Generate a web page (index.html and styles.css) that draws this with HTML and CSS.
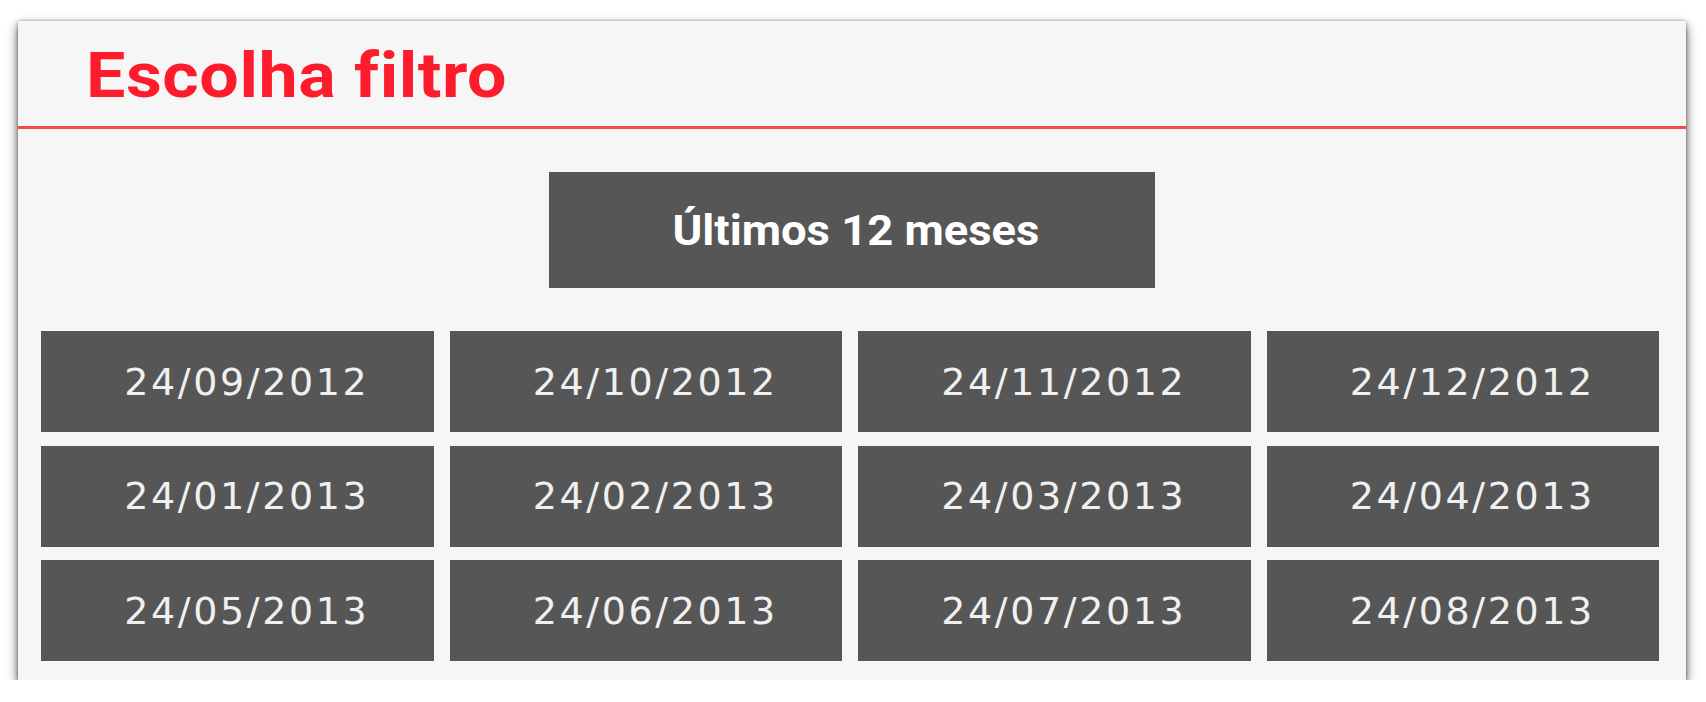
FILE: index.html
```html
<!DOCTYPE html>
<html lang="pt">
<head>
<meta charset="utf-8">
<title>Escolha filtro</title>
<link rel="stylesheet" href="styles.css">
</head>
<body>
<div class="panel">
  <div class="header">
    <h1 class="title">Escolha filtro</h1>
  </div>
  <div class="content">
    <button class="main-btn"><span class="main-label">Últimos 12 meses</span></button>
    <div class="grid">
      <button class="date-btn">24/09/2012</button>
      <button class="date-btn">24/10/2012</button>
      <button class="date-btn">24/11/2012</button>
      <button class="date-btn">24/12/2012</button>
      <button class="date-btn">24/01/2013</button>
      <button class="date-btn">24/02/2013</button>
      <button class="date-btn">24/03/2013</button>
      <button class="date-btn">24/04/2013</button>
      <button class="date-btn">24/05/2013</button>
      <button class="date-btn">24/06/2013</button>
      <button class="date-btn">24/07/2013</button>
      <button class="date-btn">24/08/2013</button>
    </div>
  </div>
</div>
</body>
</html>
```
FILE: styles.css
```css
html, body {
  margin: 0;
  padding: 0;
  background: #ffffff;
}
body {
  font-family: Roboto, "Liberation Sans", sans-serif;
}
.panel {
  margin: 21px 0 0 18px;
  width: 1668px;
  height: 659px;
  background: #f6f6f6;
  box-shadow: 0 5px 10px rgba(0, 0, 0, 0.7), 0 0 3px rgba(0, 0, 0, 0.35);
  display: flex;
  flex-direction: column;
}
.header {
  height: 105px;
  border-bottom: 3px solid #f04a4a;
  display: flex;
  align-items: center;
  padding-left: 68px;
}
.title {
  margin: 0;
  font-family: Roboto, "Liberation Sans", sans-serif;
  font-weight: 700;
  font-size: 63px;
  letter-spacing: 0.5px;
  font-variant-ligatures: none;
  color: #fc1c2c;
  line-height: 1;
  padding-top: 4px;
  transform: scaleX(1.11);
  transform-origin: left center;
}
.content {
  padding: 43px 27px 0 23px;
  display: flex;
  flex-direction: column;
}
.main-btn {
  align-self: center;
  margin-left: 4px;
  width: 606px;
  height: 116px;
  border: none;
  background: #565656;
  color: #ffffff;
  font-family: Roboto, "Liberation Sans", sans-serif;
  font-weight: 700;
  font-size: 42px;
  padding: 0 0 0 8px;
  display: flex;
  align-items: center;
  justify-content: center;
}
.main-label {
  display: inline-block;
  transform: scaleX(1.08);
}
.grid {
  margin-top: 43px;
  display: grid;
  grid-template-columns: repeat(4, 1fr);
  grid-auto-rows: 101px;
  column-gap: 16px;
  row-gap: 13.5px;
}
.date-btn {
  border: none;
  background: #565656;
  color: #f0f0f0;
  font-family: "DejaVu Sans", Roboto, sans-serif;
  font-weight: 400;
  font-size: 38px;
  letter-spacing: 2.6px;
  padding: 0 0 0 19px;
}
```
